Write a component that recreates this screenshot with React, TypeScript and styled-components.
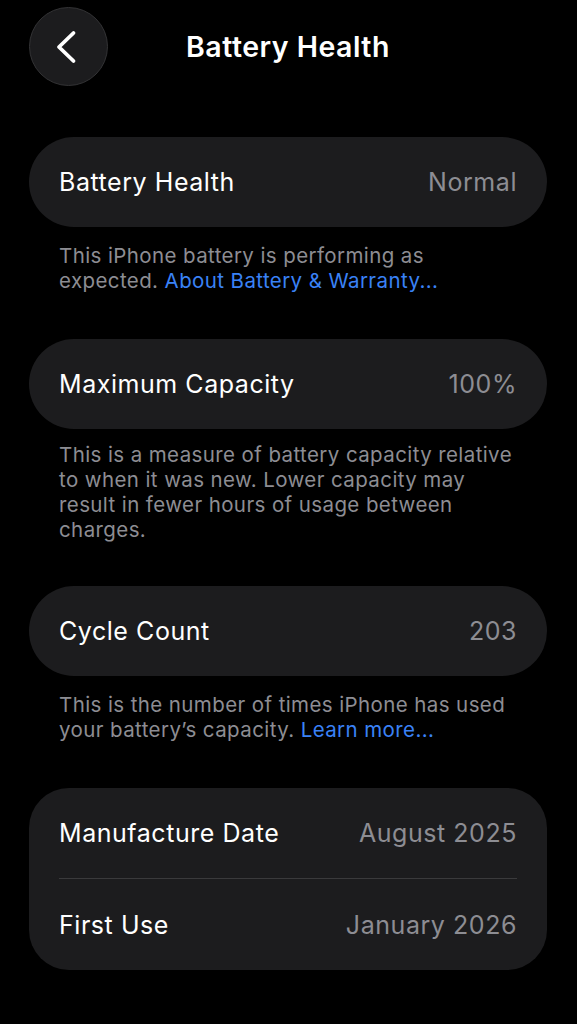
import React from "react";
import styled, { createGlobalStyle } from "styled-components";

const GlobalStyle = createGlobalStyle`
  html, body {
    margin: 0;
    padding: 0;
    background: #000;
  }
  body {
    font-family: Inter, "Noto Sans", "Liberation Sans", sans-serif;
    -webkit-font-smoothing: antialiased;
  }
`;

const CARD_BG = "#1c1c1e";
const LABEL = "#ffffff";
const SECONDARY = "#8d8d93";
const LINK = "#3a82f6";
const DIVIDER = "#3a3a3c";

const Page = styled.div`
  width: 577px;
  min-height: 1024px;
  background: #000;
  display: flex;
  flex-direction: column;
  padding: 7px 30px 0 29px;
  box-sizing: border-box;
`;

const Header = styled.div`
  display: grid;
  grid-template-columns: 79px 1fr 79px;
  align-items: center;
  height: 79px;
  margin-bottom: 51px;
`;

const BackButton = styled.button`
  width: 79px;
  height: 79px;
  border-radius: 50%;
  background: ${CARD_BG};
  border: 1px solid #333335;
  display: flex;
  align-items: center;
  justify-content: center;
  padding: 0 4px 0 0;
  box-sizing: border-box;
`;

const Title = styled.h1`
  margin: 0;
  text-align: center;
  color: ${LABEL};
  font-size: 28.5px;
  font-weight: 600;
  letter-spacing: 0.5px;
`;

const Card = styled.div<{ $radius?: number }>`
  background: ${CARD_BG};
  border-radius: ${({ $radius }) => $radius ?? 45}px;
  padding: 0 30px;
  display: flex;
  flex-direction: column;
`;

const Row = styled.div<{ $divider?: boolean }>`
  height: ${({ $divider }) => ($divider ? 91 : 90)}px;
  display: flex;
  align-items: center;
  justify-content: space-between;
  border-top: ${({ $divider }) => ($divider ? `1.5px solid ${DIVIDER}` : "none")};
  font-size: 25px;
  letter-spacing: 0.55px;
`;

const Label = styled.span`
  color: ${LABEL};
`;

const Value = styled.span`
  color: ${SECONDARY};
`;

const Footer = styled.p<{ $compact?: boolean }>`
  margin: ${({ $compact }) => ($compact ? "13px 0 44px 0" : "16px 0 46px 0")};
  padding: 0 29px 0 30px;
  color: ${SECONDARY};
  font-size: 20.5px;
  line-height: 25px;
  letter-spacing: 0.4px;
`;

const Link = styled.span`
  color: ${LINK};
`;

const Chevron = () => (
  <svg width="24" height="36" viewBox="0 0 24 36" fill="none">
    <path
      d="M18.5 4 L4 18 L18.5 32"
      stroke="#fff"
      strokeWidth="3.8"
      strokeLinecap="round"
      strokeLinejoin="round"
    />
  </svg>
);

export default function App() {
  return (
    <>
      <GlobalStyle />
      <Page>
        <Header>
          <BackButton aria-label="Back">
            <Chevron />
          </BackButton>
          <Title>Battery Health</Title>
          <span />
        </Header>

        <Card>
          <Row>
            <Label>Battery Health</Label>
            <Value>Normal</Value>
          </Row>
        </Card>
        <Footer>
          This iPhone battery is performing as expected.{" "}
          <Link>About Battery &amp; Warranty...</Link>
        </Footer>

        <Card>
          <Row>
            <Label>Maximum Capacity</Label>
            <Value>100%</Value>
          </Row>
        </Card>
        <Footer $compact>
          This is a measure of battery capacity relative to when it was new.
          Lower capacity may result in fewer hours of usage between charges.
        </Footer>

        <Card>
          <Row>
            <Label>Cycle Count</Label>
            <Value>203</Value>
          </Row>
        </Card>
        <Footer>
          This is the number of times iPhone has used your battery’s capacity.{" "}
          <Link>Learn more...</Link>
        </Footer>

        <Card $radius={40}>
          <Row>
            <Label>Manufacture Date</Label>
            <Value>August 2025</Value>
          </Row>
          <Row $divider>
            <Label>First Use</Label>
            <Value>January 2026</Value>
          </Row>
        </Card>
      </Page>
    </>
  );
}
